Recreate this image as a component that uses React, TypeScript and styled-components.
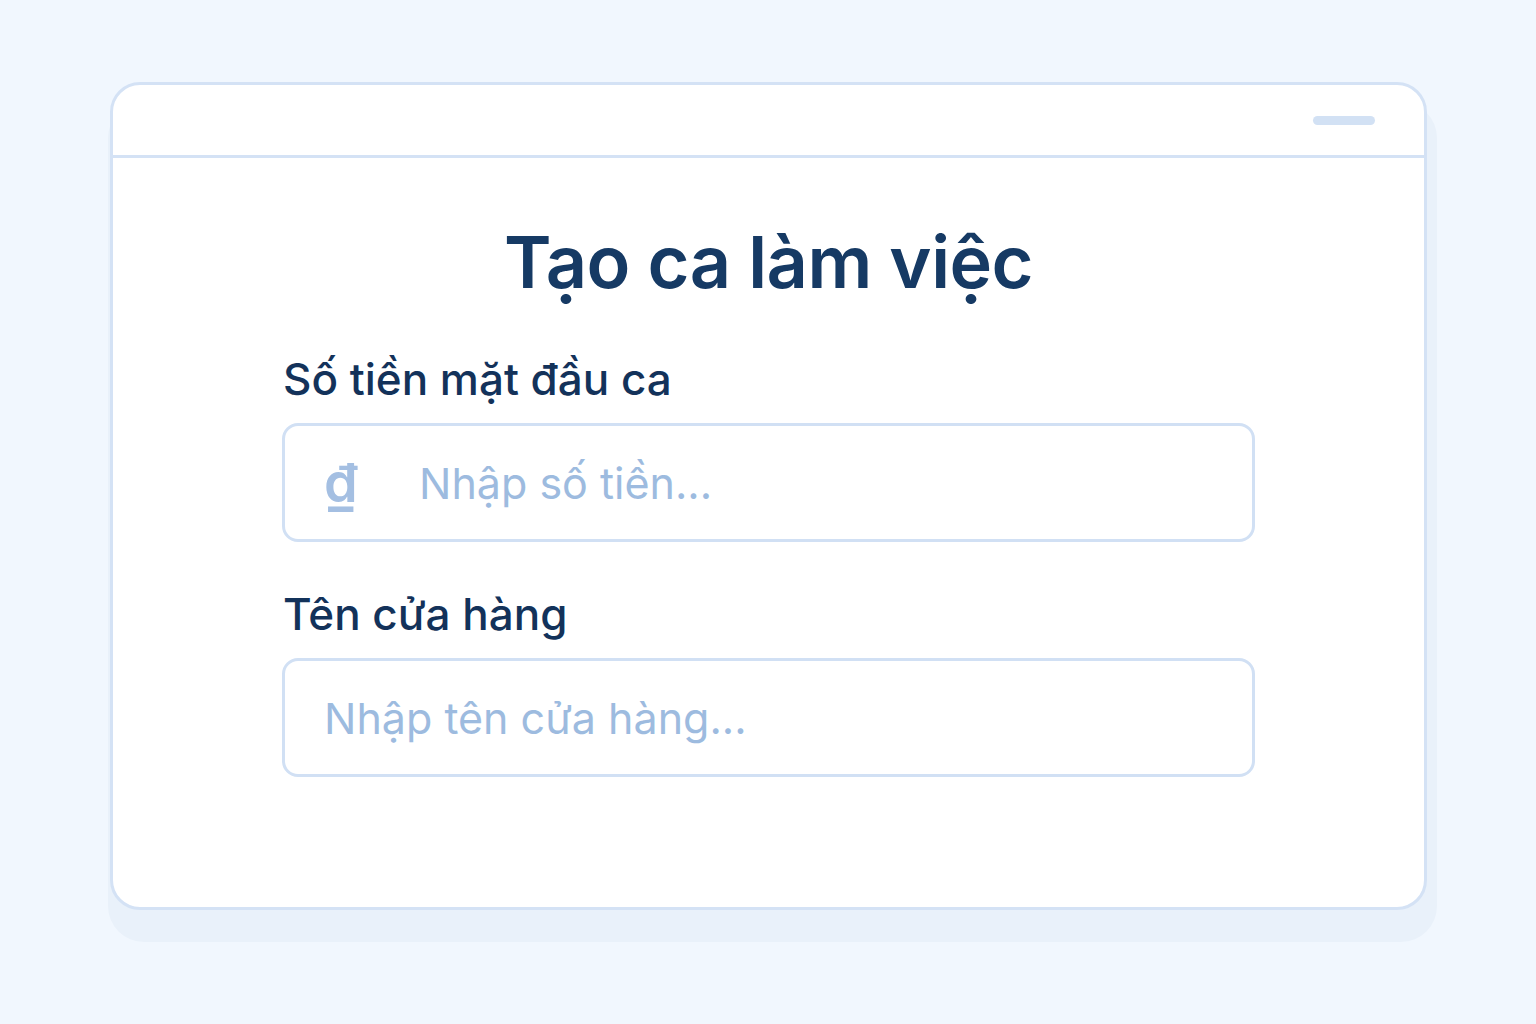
import React from "react";
import styled, { createGlobalStyle } from "styled-components";

const Global = createGlobalStyle`
  html, body { margin: 0; padding: 0; background: #f1f7fe; }
  body { font-family: Inter, "Noto Sans", sans-serif; }
  * { box-sizing: border-box; }
`;

const Page = styled.div`
  width: 1536px;
  height: 1024px;
  background: #f1f7fe;
  padding: 82px 0 0 110px;
`;

const Card = styled.div`
  width: 1317px;
  height: 828px;
  background: #ffffff;
  border: 3px solid #d4e2f5;
  border-radius: 30px;
  box-shadow: 4px 26px 0 6px #e9f1fa;
  display: flex;
  flex-direction: column;
`;

const Header = styled.div`
  height: 73px;
  border-bottom: 3px solid #d4e2f5;
  display: flex;
  align-items: center;
  justify-content: flex-end;
  padding-right: 49px;
`;

const Pill = styled.div`
  width: 62px;
  height: 9px;
  border-radius: 5px;
  background: #d2e1f4;
`;

const Body = styled.div`
  padding: 0 169px;
  display: flex;
  flex-direction: column;
`;

const Title = styled.h1`
  margin: 59px 0 0;
  text-align: center;
  font-size: 72px;
  line-height: 90px;
  font-weight: 600;
  color: #163a64;
  letter-spacing: -0.5px;
`;

const Label = styled.label`
  margin-top: 46px;
  padding-left: 1px;
  font-size: 44px;
  line-height: 52px;
  font-weight: 500;
  color: #13325a;
`;

const Field = styled.div`
  margin-top: 18px;
  height: 119px;
  border: 3px solid #d1e0f4;
  border-radius: 16px;
  display: flex;
  align-items: center;
  padding-left: 39px;
`;

const Currency = styled.span`
  width: 95px;
  font-size: 54px;
  line-height: 1;
  font-weight: 600;
  color: #a4bfe2;
`;

const Placeholder = styled.span`
  font-size: 43px;
  font-weight: 400;
  color: #9dbbdf;
`;

export default function App() {
  return (
    <Page>
      <Global />
      <Card>
        <Header>
          <Pill />
        </Header>
        <Body>
          <Title>Tạo ca làm việc</Title>
          <Label>Số tiền mặt đầu ca</Label>
          <Field>
            <Currency>₫</Currency>
            <Placeholder>Nhập số tiền...</Placeholder>
          </Field>
          <Label>Tên cửa hàng</Label>
          <Field>
            <Placeholder>Nhập tên cửa hàng...</Placeholder>
          </Field>
        </Body>
      </Card>
    </Page>
  );
}
